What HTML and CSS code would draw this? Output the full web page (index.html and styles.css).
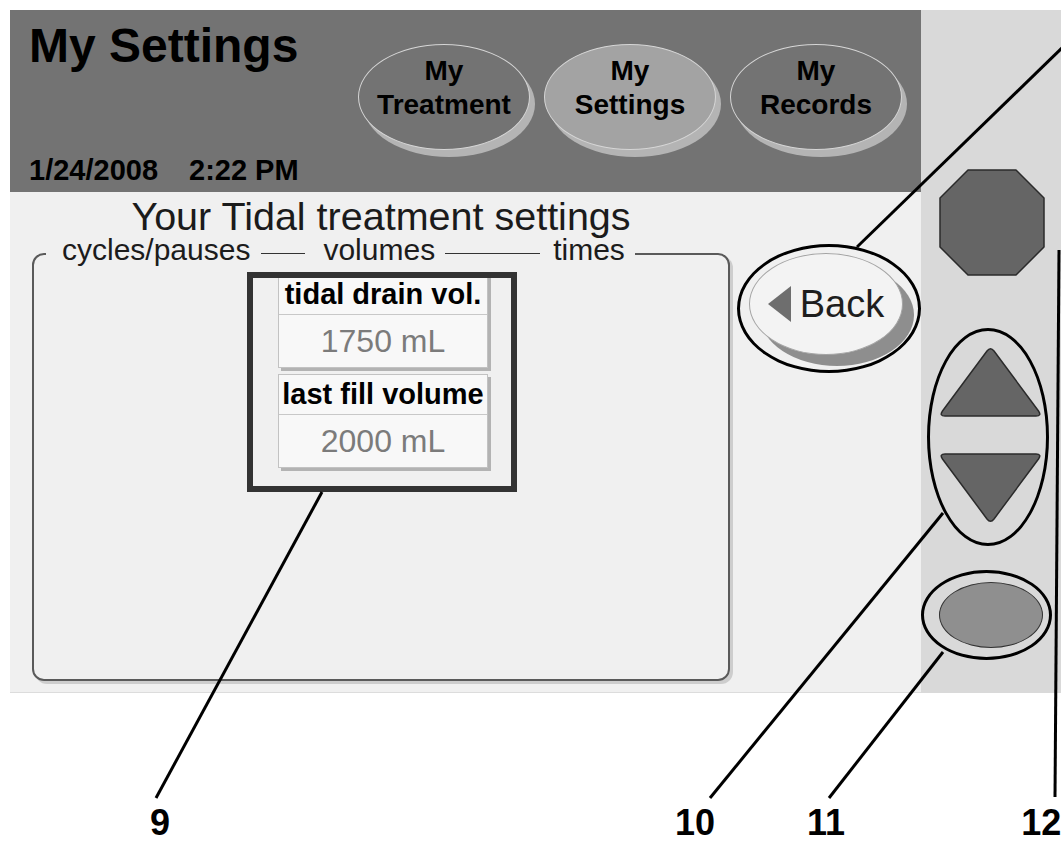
FILE: index.html
```html
<!DOCTYPE html>
<html lang="en">
<head>
    <meta charset="UTF-8">
    <title>My Settings</title>
    <link rel="stylesheet" href="styles.css">
</head>
<body>

<div class="device">
    <div class="screen">
        <div class="header">
            <div class="title-col">
                <h1>My Settings</h1>
                <div class="clock"><span>1/24/2008</span><span>2:22 PM</span></div>
            </div>
            <div class="tabs">
                <div class="tab">My<br>Treatment</div>
                <div class="tab active">My<br>Settings</div>
                <div class="tab">My<br>Records</div>
            </div>
        </div>

        <div class="content">
            <div class="settings">
                <h2>Your Tidal treatment settings</h2>
                <fieldset class="panel">
                    <legend>cycles/pauses<span class="dash short"></span>volumes<span class="dash long"></span>times</legend>
                    <div class="callout-box">
                        <div class="card first">
                            <div class="card-label">tidal drain vol.</div>
                            <div class="card-value">1750 mL</div>
                        </div>
                        <div class="card">
                            <div class="card-label">last fill volume</div>
                            <div class="card-value">2000 mL</div>
                        </div>
                    </div>
                </fieldset>
            </div>
            <div class="ring back-ring">
                <div class="back"><span class="arrow-left"></span>Back</div>
            </div>
        </div>
    </div>

    <div class="keys">
        <svg class="stop" width="106" height="107" viewBox="0 0 106 107">
            <polygon points="29,1 77,1 105,29 105,78 77,106 29,106 1,78 1,29" fill="#656565" stroke="#2b2b2b" stroke-width="1.5" stroke-linejoin="round"/>
        </svg>
        <div class="ring arrows">
            <svg width="105" height="71" viewBox="0 0 105 71">
                <path d="M7 70 L98 70 Q104 70 100.5 65 L56 5 Q52.5 0.5 49 5 L4.5 65 Q1 70 7 70 Z" fill="#656565" stroke="#2b2b2b" stroke-width="1.5"/>
            </svg>
            <svg width="105" height="71" viewBox="0 0 105 71">
                <path d="M7 1 L98 1 Q104 1 100.5 6 L56 66 Q52.5 70.5 49 66 L4.5 6 Q1 1 7 1 Z" fill="#656565" stroke="#2b2b2b" stroke-width="1.5"/>
            </svg>
        </div>
        <div class="ring ok-ring">
            <div class="ok"></div>
        </div>
    </div>
</div>

<div class="numbers">
    <span class="n9">9</span>
    <span class="n10">10</span>
    <span class="n11">11</span>
    <span class="n12">12</span>
</div>

<svg class="leaders" width="1061" height="842" viewBox="0 0 1061 842">
    <g stroke="#000" stroke-width="3">
        <line x1="322" y1="492" x2="156" y2="798"/>
        <line x1="943" y1="513" x2="710" y2="798"/>
        <line x1="943" y1="652" x2="829" y2="798"/>
        <line x1="1059" y1="250" x2="1055" y2="797"/>
        <line x1="1101" y1="10" x2="857" y2="247"/>
    </g>
</svg>

</body>
</html>
```

FILE: styles.css
```css
* {
    box-sizing: border-box;
}
html, body {
    margin: 0;
}
body {
    position: relative;
    width: 1061px;
    height: 842px;
    overflow: hidden;
    padding: 10px 0 0 10px;
    background: #fff;
    font-family: "Liberation Sans", Arial, sans-serif;
    color: #111;
}
.device {
    display: flex;
    height: 683px;
}
.screen {
    width: 911px;
    display: flex;
    flex-direction: column;
}

/* header */
.header {
    height: 182px;
    background: #737373;
    display: flex;
}
.title-col {
    width: 348px;
    padding: 12px 0 7px 19px;
    display: flex;
    flex-direction: column;
    justify-content: space-between;
}
h1 {
    margin: 0;
    font-size: 48px;
    line-height: 48px;
    font-weight: bold;
    color: #000;
}
.clock {
    display: flex;
    gap: 31px;
    font-size: 29px;
    line-height: 30px;
    font-weight: bold;
    color: #000;
}
.tabs {
    display: flex;
    gap: 14px;
    padding-top: 34px;
    align-items: flex-start;
}
.tab {
    width: 172px;
    height: 106px;
    padding-bottom: 19px;
    border-radius: 50%;
    border: 1px solid #d6d6d6;
    background: #737373;
    box-shadow: 5px 7px 0 #b4b4b4;
    display: flex;
    flex-direction: column;
    justify-content: center;
    align-items: center;
    text-align: center;
    font-size: 28px;
    line-height: 34px;
    font-weight: bold;
    color: #000;
}
.tab.active {
    background: #a3a3a3;
}

/* settings area */
.content {
    height: 501px;
    background: #f0f0f0;
    border-bottom: 1px solid #dcdcdc;
    display: flex;
    align-items: flex-start;
}
.settings {
    width: 720px;
    padding-left: 22px;
}
h2 {
    margin: 0 0 1px;
    padding-top: 6px;
    font-size: 39.5px;
    line-height: 36px;
    font-weight: normal;
    text-align: center;
    color: #1b1b1b;
}
.panel {
    margin: 0;
    padding: 0;
    min-width: 0;
    width: 698px;
    height: 446px;
    border: 2px solid #5a5a5a;
    border-radius: 12px;
    box-shadow: 3px 3px 0 #cdcdcd;
}
.panel legend {
    margin-left: 12px;
    padding: 0 10px 8px 16px;
    font-size: 30px;
    line-height: 30px;
    color: #1c1c1c;
    white-space: nowrap;
}
.dash {
    display: inline-block;
    border-top: 1px solid #333;
    vertical-align: 6px;
}
.dash.short {
    width: 44px;
    margin: 0 18px 0 11px;
}
.dash.long {
    width: 95px;
    margin: 0 13px 0 10px;
}
.callout-box {
    display: flex;
    flex-direction: column;
    width: 258px;
    height: 208px;
    margin: 5px 0 0 219px;
    padding-left: 25px;
    outline: 6px solid #333;
}
.card {
    width: 210px;
    margin-top: 6px;
    background: #f8f8f8;
    border: 1px solid #c2c2c2;
    box-shadow: 3px 3px 0 #b3b3b3;
    text-align: center;
}
.card.first {
    margin-top: -4px;
}
.card-label {
    font-size: 29px;
    line-height: 39px;
    font-weight: bold;
    color: #000;
    white-space: nowrap;
    border-bottom: 1px solid #c8c8c8;
}
.card-value {
    font-size: 32px;
    line-height: 52px;
    color: #7b7b7b;
}

/* rings drawn round the buttons */
.ring {
    border: 3px solid #000;
    border-radius: 50%;
}
.back-ring {
    width: 184px;
    height: 129px;
    margin: 52px 0 0 7px;
    padding: 6px 0 0 9px;
}
.back {
    width: 154px;
    height: 102px;
    border-radius: 50%;
    border: 1px solid #a4a4a4;
    background: #f3f3f3;
    box-shadow: 11px 11px 0 #8e8e8e;
    display: flex;
    align-items: center;
    justify-content: center;
    gap: 9px;
    font-size: 38px;
    line-height: 1;
    color: #1e1e1e;
}
.arrow-left {
    width: 0;
    height: 0;
    border-top: 18px solid transparent;
    border-bottom: 18px solid transparent;
    border-right: 23px solid #6e6e6e;
}

/* hard keys */
.keys {
    width: 140px;
    background: #d9d9d9;
    display: flex;
    flex-direction: column;
    align-items: flex-start;
}
.stop {
    display: block;
    margin: 159px 0 0 18px;
}
.arrows {
    width: 122px;
    height: 218px;
    margin: 52px 0 0 6px;
    padding: 15px 0 0 8px;
    display: flex;
    flex-direction: column;
    gap: 36px;
}
.arrows svg {
    display: block;
}
.ok-ring {
    width: 131px;
    height: 90px;
    margin-top: 24px;
    padding: 9px 0 0 15px;
}
.ok {
    width: 104px;
    height: 66px;
    border-radius: 50%;
    background: #8f8f8f;
    border: 1.5px solid #333;
}

/* callout numbers */
.numbers {
    display: flex;
    margin-top: 114px;
    font-size: 36px;
    line-height: 32px;
    font-weight: bold;
    color: #000;
}
.n9 {
    margin-left: 140px;
}
.n10 {
    margin-left: 505px;
}
.n11 {
    margin-left: 92px;
}
.n12 {
    margin-left: 176px;
}
.leaders {
    position: absolute;
    left: 0;
    top: 0;
    pointer-events: none;
}
```
